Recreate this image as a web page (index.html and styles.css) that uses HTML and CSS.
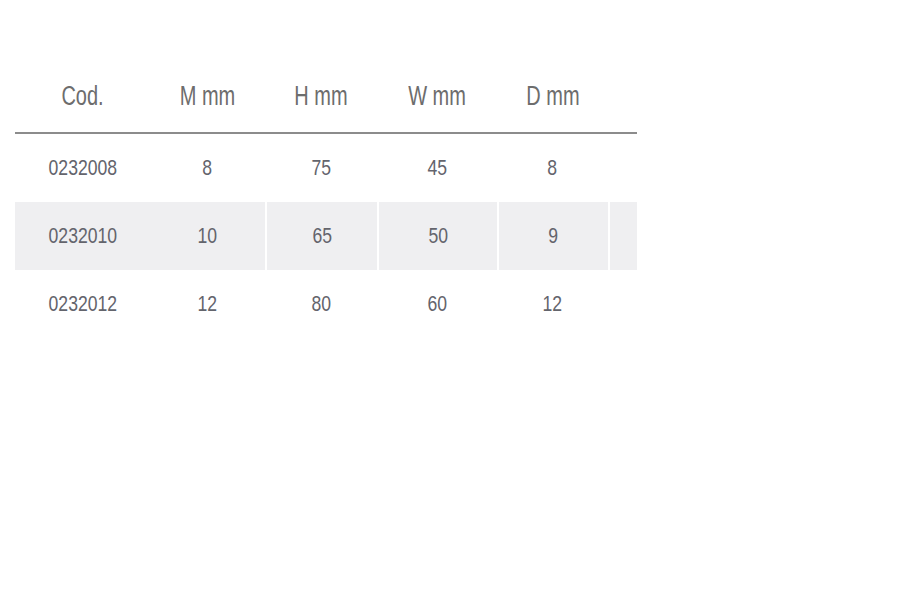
FILE: index.html
```html
<!DOCTYPE html>
<html>
<head>
<meta charset="utf-8">
<link rel="stylesheet" href="styles.css">
</head>
<body>
<div class="table">
  <div class="row head">
    <div class="cell c1"><span class="t">Cod.</span></div>
    <div class="cell c2"><span class="t">M mm</span></div>
    <div class="cell c3"><span class="t">H mm</span></div>
    <div class="cell c4"><span class="t">W mm</span></div>
    <div class="cell c5"><span class="t">D mm</span></div>
    <div class="cell c6"></div>
  </div>
  <div class="row">
    <div class="cell c1"><span class="t">0232008</span></div>
    <div class="cell c2"><span class="t">8</span></div>
    <div class="cell c3"><span class="t">75</span></div>
    <div class="cell c4"><span class="t">45</span></div>
    <div class="cell c5"><span class="t">8</span></div>
    <div class="cell c6"></div>
  </div>
  <div class="row band">
    <div class="cell c1"><span class="t">0232010</span></div>
    <div class="cell c2"><span class="t">10</span></div>
    <div class="cell c3 sep"><span class="t">65</span></div>
    <div class="cell c4 sep"><span class="t">50</span></div>
    <div class="cell c5 sep"><span class="t">9</span></div>
    <div class="cell c6 sep"></div>
  </div>
  <div class="row">
    <div class="cell c1"><span class="t">0232012</span></div>
    <div class="cell c2"><span class="t">12</span></div>
    <div class="cell c3"><span class="t">80</span></div>
    <div class="cell c4"><span class="t">60</span></div>
    <div class="cell c5"><span class="t">12</span></div>
    <div class="cell c6"></div>
  </div>
</div>
</body>
</html>
```
FILE: styles.css
```css
html, body {
  margin: 0;
  padding: 0;
  background: #ffffff;
}
body {
  padding: 64px 0 0 15px;
  font-family: "Liberation Sans Narrow", "Liberation Sans", Arial, sans-serif;
}
.table {
  width: 622px;
  display: flex;
  flex-direction: column;
}
.row {
  display: grid;
  grid-template-columns: 135px 115px 112px 120px 111px 29px;
  height: 68px;
  align-items: stretch;
}
.row.head {
  border-bottom: 2px solid #8c8c8c;
}
.row.band {
  background: #efeff1;
}
.cell {
  display: flex;
  align-items: center;
  justify-content: center;
}
.sep {
  border-left: 2px solid #ffffff;
}
.t {
  display: inline-block;
  color: #63646c;
  font-size: 22px;
  transform: scaleX(0.8);
}
.head .cell {
  padding-bottom: 4px;
}
.head .t {
  font-size: 27px;
  color: #6d6d6d;
  transform: scaleX(0.74);
}
```
